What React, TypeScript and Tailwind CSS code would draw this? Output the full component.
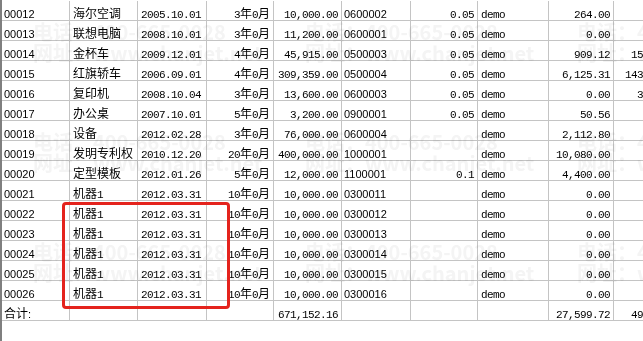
import React from "react";

const colCls = [
  "w-[68px] justify-start pl-[2px]",
  "w-[68px] justify-start pl-[3px]",
  "w-[69px] justify-start pl-[3px]",
  "w-[67px] justify-end pr-[3px]",
  "w-[68px] justify-end pr-[3px]",
  "w-[69px] justify-start pl-[2px]",
  "w-[67px] justify-end pr-[3px]",
  "w-[71px] justify-start pl-[3px]",
  "w-[65px] justify-end pr-[3px]",
  "w-[76px] justify-end pr-[4px]",
];

const codeCols = new Set([0, 5]);

const rows: string[][] = [
  ["00012", "海尔空调", "2005.10.01", "3年0月", "10,000.00", "0600002", "0.05", "demo", "264.00", ""],
  ["00013", "联想电脑", "2008.10.01", "3年0月", "11,200.00", "0600001", "0.05", "demo", "0.00", ""],
  ["00014", "金杯车", "2009.12.01", "4年0月", "45,915.00", "0500003", "0.05", "demo", "909.12", "15,153.21"],
  ["00015", "红旗轿车", "2006.09.01", "4年0月", "309,359.00", "0500004", "0.05", "demo", "6,125.31", "143,561.29"],
  ["00016", "复印机", "2008.10.04", "3年0月", "13,600.00", "0600003", "0.05", "demo", "0.00", "3,917.82"],
  ["00017", "办公桌", "2007.10.01", "5年0月", "3,200.00", "0900001", "0.05", "demo", "50.56", ""],
  ["00018", "设备", "2012.02.28", "3年0月", "76,000.00", "0600004", "", "demo", "2,112.80", ""],
  ["00019", "发明专利权", "2010.12.20", "20年0月", "400,000.00", "1000001", "", "demo", "10,080.00", ""],
  ["00020", "定型模板", "2012.01.26", "5年0月", "12,000.00", "1100001", "0.1", "demo", "4,400.00", ""],
  ["00021", "机器1", "2012.03.31", "10年0月", "10,000.00", "0300011", "", "demo", "0.00", ""],
  ["00022", "机器1", "2012.03.31", "10年0月", "10,000.00", "0300012", "", "demo", "0.00", ""],
  ["00023", "机器1", "2012.03.31", "10年0月", "10,000.00", "0300013", "", "demo", "0.00", ""],
  ["00024", "机器1", "2012.03.31", "10年0月", "10,000.00", "0300014", "", "demo", "0.00", ""],
  ["00025", "机器1", "2012.03.31", "10年0月", "10,000.00", "0300015", "", "demo", "0.00", ""],
  ["00026", "机器1", "2012.03.31", "10年0月", "10,000.00", "0300016", "", "demo", "0.00", ""],
  ["合计:", "", "", "", "671,152.16", "", "", "", "27,599.72", "49,883.40"],
];

function T({ s, code }: { s: string; code: boolean }) {
  const parts = s.match(/[\x00-\x7f]+|[^\x00-\x7f]+/g) || [];
  return (
    <span className="whitespace-nowrap">
      {parts.map((p, i) =>
        /^[\x00-\x7f]+$/.test(p) ? (
          code ? (
            <span key={i} className="font-['Liberation_Sans',sans-serif] text-[11px]">
              {p}
            </span>
          ) : (
            <span key={i} className="font-['Liberation_Mono',monospace] text-[11px] tracking-[-0.6px]">
              {p}
            </span>
          )
        ) : (
          <span key={i} className="font-['Noto_Sans_CJK_SC',sans-serif] text-[12px]">
            {p}
          </span>
        )
      )}
    </span>
  );
}

const wmX = [33, 305, 577];
const wmY = [21, 131, 241];

export default function App() {
  return (
    <div className="relative w-[643px] h-[341px] overflow-hidden bg-white text-black">
      <div className="h-full border-l-2 border-[#7f7f7f] pt-[1px]">
        {rows.map((r, ri) => (
          <div key={ri} className="flex h-[20px] border-b border-[#c4c4c4] w-max">
            {r.map((c, ci) => (
              <div
                key={ci}
                className={`flex items-center shrink-0 h-full border-r border-[#c4c4c4] pt-[3px] overflow-hidden leading-none ${colCls[ci]}`}
              >
                <T s={c} code={codeCols.has(ci) || (ri === 15 && ci === 0)} />
              </div>
            ))}
          </div>
        ))}
      </div>

      {/* watermark */}
      <div className="pointer-events-none absolute inset-0 mix-blend-multiply">
        {wmY.map((y) =>
          wmX.map((x) => (
            <div
              key={`${x}-${y}`}
              className="absolute flex flex-col font-['Noto_Sans_CJK_SC',sans-serif] text-[20px] leading-[21px] font-bold text-[#f4f4f4] whitespace-nowrap"
              style={{ left: x, top: y }}
            >
              <span>电话：400-665-0028</span>
              <span>网址：www.chanjet.net</span>
            </div>
          ))
        )}
      </div>

      {/* red highlight box */}
      <div className="pointer-events-none absolute left-[62px] top-[202px] w-[168px] h-[107px] border-[3px] border-[#e4231d] rounded-[4px]" />
    </div>
  );
}
